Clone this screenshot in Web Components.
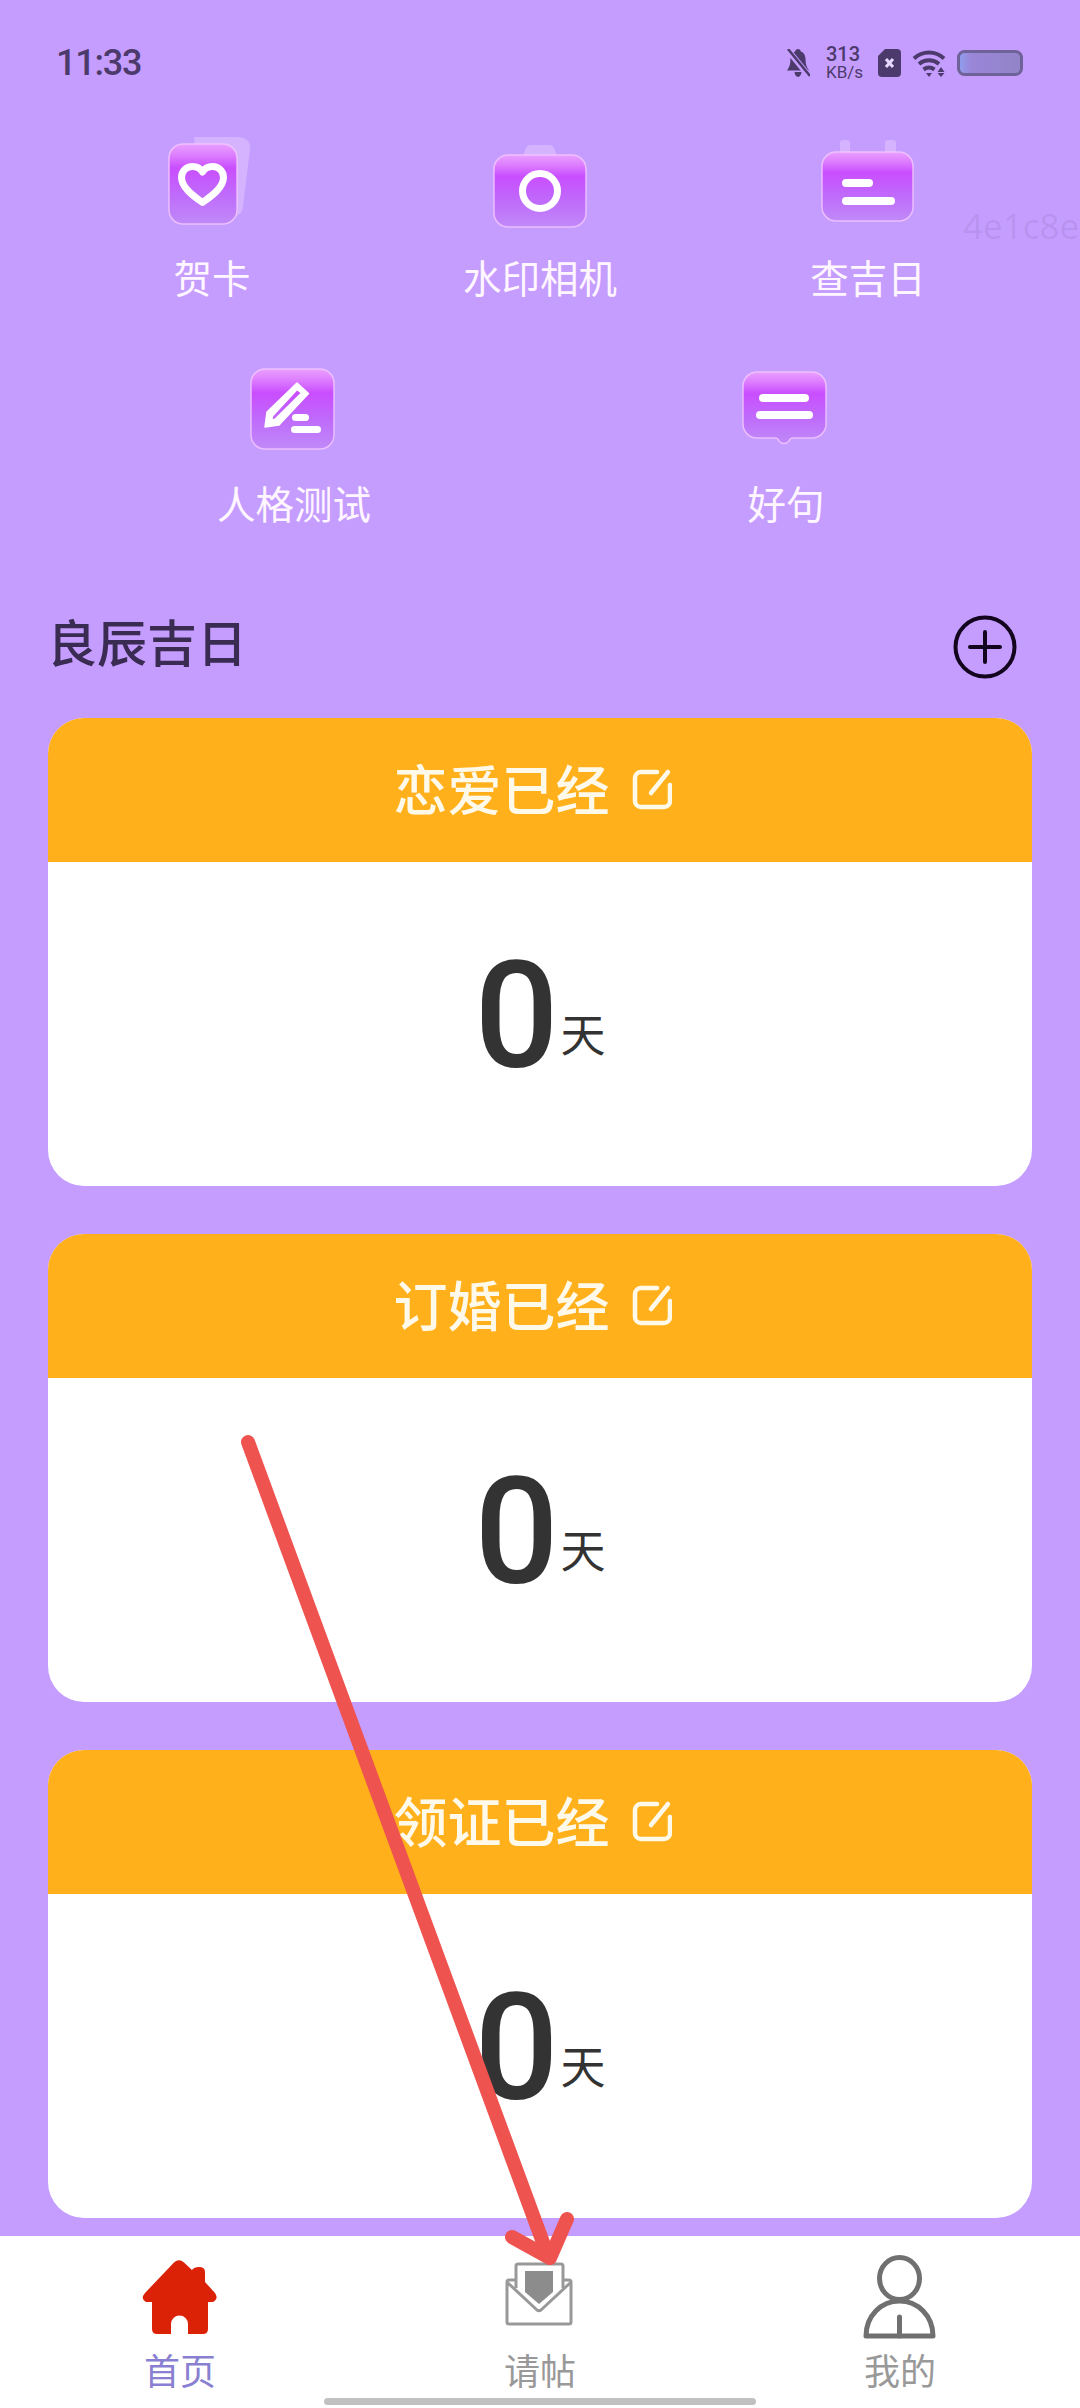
<!DOCTYPE html>
<html lang="zh">
<head>
<meta charset="utf-8">
<title>良辰吉日</title>
<style>
    html, body { margin: 0; padding: 0; background: #c59dff; }
    body { font-family: "Noto Sans CJK SC", "Noto Sans", sans-serif; }
</style>
</head>
<body>
<app-shell>
    <status-bar></status-bar>
    <tool-row columns="3">
        <tool-item icon="heart">贺卡</tool-item>
        <tool-item icon="camera">水印相机</tool-item>
        <tool-item icon="calendar">查吉日</tool-item>
    </tool-row>
    <tool-row columns="2" class="second">
        <tool-item icon="pencil">人格测试</tool-item>
        <tool-item icon="quote">好句</tool-item>
    </tool-row>
    <section-head>良辰吉日</section-head>
    <card-list>
        <day-card>恋爱已经</day-card>
        <day-card>订婚已经</day-card>
        <day-card>领证已经</day-card>
    </card-list>
    <tab-bar>
        <tab-item icon="home" active>首页</tab-item>
        <tab-item icon="mail">请帖</tab-item>
        <tab-item icon="user">我的</tab-item>
    </tab-bar>
    <water-mark>4e1c8e</water-mark>
    <drawn-arrow></drawn-arrow>
</app-shell>

<script>
class AppShell extends HTMLElement {
    constructor() {
        super()
        this.attachShadow({ mode: 'open' }).innerHTML = `<style>
            :host {
                display: flex;
                flex-direction: column;
                position: relative;
                width: 1080px;
                height: 2408px;
                overflow: hidden;
                background: #c59dff;
            }
        </style><slot></slot>`
    }
}

class StatusBar extends HTMLElement {
    constructor() {
        super()
        this.attachShadow({ mode: 'open' }).innerHTML = `<style>
            :host {
                display: flex;
                justify-content: space-between;
                box-sizing: border-box;
                height: 130px;
                padding: 38px 57px 0 56px;
                color: #4d3a6c;
                font-family: Roboto, sans-serif;
            }
            .time { font-size: 36px; font-weight: 500; line-height: 50px; letter-spacing: -1.2px; }
            .icons { display: flex; align-items: center; height: 50px; }
            .speed { margin: 0 14px 0 16px; width: 38px; font-size: 20px; line-height: 18px; font-weight: 500; }
            .speed small { display: block; font-size: 17px; font-weight: 400; white-space: nowrap; }
            svg { display: block; }
            .wifi { margin: 0 11px; }
        </style>
        <div class="time">11:33</div>
        <div class="icons">
            <svg width="24" height="28" viewBox="0 0 24 28" fill="#4d3a6c">
                <path d="M12 0c-1.600 0-2.600 1-2.800 2.400C5.600 3.600 4.400 7 4.400 11c0 4-.9 7.400-3.400 10.400h22c-2.500-3-3.400-6.400-3.400-10.400 0-4-1.200-7.400-4.800-8.600C14.600 1 13.600 0 12 0zM8.500 23c.3 2.800 1.700 5 3.500 5s3.200-2.200 3.500-5z"/>
                <path d="M1 0l22 27" stroke="#c59dff" stroke-width="6"/>
                <path d="M2 0l22 27" stroke="#4d3a6c" stroke-width="2.500"/>
            </svg>
            <div class="speed">313<small>KB/s</small></div>
            <svg width="23" height="28" viewBox="0 0 23 28">
                <path d="M7 0h12a4 4 0 0 1 4 4v20a4 4 0 0 1-4 4H4a4 4 0 0 1-4-4V7z" fill="#4d3a6c"/>
                <path d="M8 10l7 8M15 10l-7 8" stroke="#e6d8ff" stroke-width="3"/>
            </svg>
            <svg class="wifi" width="34" height="27" viewBox="0 0 34 27" fill="none" stroke="#4d3a6c" stroke-width="4">
                <path d="M2 8.500C10.500 .5 23.500 .5 32 8.500"/>
                <path d="M7 14c6-5 14-5 20 0"/>
                <path d="M11.500 19.500c3.500-2.500 7.500-2.500 11 0"/>
                <path d="M14 23h6l-3 4z" fill="#4d3a6c" stroke="none"/>
                <path d="M29 17l3.500 5h-7zM29 27l3.500-4h-7z" fill="#4d3a6c" stroke="none"/>
            </svg>
            <svg width="66" height="26" viewBox="0 0 66 26">
                <defs><linearGradient id="charge" x1="0" x2="1" y1="0" y2="0">
                    <stop offset="0" stop-color="#8f9ff0"/><stop offset=".2" stop-color="#9a86d8"/><stop offset="1" stop-color="#9284c8"/>
                </linearGradient></defs>
                <rect x="1.500" y="1.500" width="63" height="23" rx="6" fill="url(#charge)" stroke="#6f6298" stroke-width="3"/>
            </svg>
        </div>`
    }
}

class ToolRow extends HTMLElement {
    constructor() {
        super()
        this.attachShadow({ mode: 'open' }).innerHTML = `<style>
            :host {
                display: grid;
                grid-template-columns: repeat(${this.getAttribute("columns")}, 1fr);
                padding: 0 48px;
            }
            :host(.second) { margin-top: 55px; }
        </style><slot></slot>`
    }
}

const toolTile = (shape) => `<path d="${shape}" fill="url(#tile)" stroke="#f2c6ff" stroke-opacity=".85" stroke-width="1.500"/>`
const toolBack = "#dcbcff"

const toolIcons = {
    heart: `<path d="M32 7h46q11 2 10 12l-7 58q-1 10-12 9L40 84z" fill="${toolBack}" opacity=".7"/>
        ${toolTile("M21 14h40a14 14 0 0 1 14 14v52a14 14 0 0 1-14 14H21a14 14 0 0 1-14-14V28a14 14 0 0 1 14-14z")}
        <path d="M40.500 72.500C33 67 19.500 58 19.500 47.500c0-6.500 5-11 11-11 4.500 0 8 2 10 5.500 2-3.500 5.500-5.500 10-5.500 6 0 11 4.500 11 11 0 10.500-13.500 19.500-21 25z" fill="none" stroke="#fff" stroke-width="7" stroke-linejoin="round"/>`,
    camera: `<path d="M33 25l3-7q1-3 5-3h18q4 0 5 3l3 7z" fill="${toolBack}" opacity=".7"/>
        ${toolTile("M18 25h64a14 14 0 0 1 14 14v44a14 14 0 0 1-14 14H18a14 14 0 0 1-14-14V39a14 14 0 0 1 14-14z")}
        <circle cx="50" cy="61" r="17.500" fill="none" stroke="#fff" stroke-width="7"/>`,
    calendar: `<rect x="22" y="10" width="10" height="14" rx="3" fill="${toolBack}" opacity=".7"/>
        <rect x="67" y="10" width="11" height="14" rx="3" fill="${toolBack}" opacity=".7"/>
        ${toolTile("M18 22h63a14 14 0 0 1 14 14v41a14 14 0 0 1-14 14H18a14 14 0 0 1-14-14V36a14 14 0 0 1 14-14z")}
        <rect x="24" y="49" width="31" height="8" rx="4" fill="#fff"/>
        <rect x="24" y="67" width="53" height="8" rx="4" fill="#fff"/>`,
    pencil: `${toolTile("M21 13h55a14 14 0 0 1 14 14v52a14 14 0 0 1-14 14H21a14 14 0 0 1-14-14V27a14 14 0 0 1 14-14z")}
        <path d="M53 27l11.500 10.500L35 69l-14 2 2-15zM53 33.500L28.500 60l-1 4 3.500-.8L57.500 37z" fill="#fff" fill-rule="evenodd" stroke="#fff" stroke-width="1.500" stroke-linejoin="round"/>
        <rect x="48" y="58" width="17" height="7" rx="3.500" fill="#fff"/>
        <rect x="47" y="70" width="30" height="7" rx="3.500" fill="#fff"/>`,
    quote: `${toolTile("M21 16h55a14 14 0 0 1 14 14v38a14 14 0 0 1-14 14H57q-3 0-4 3-5 5-10 0-1-3-4-3H21a14 14 0 0 1-14-14V30a14 14 0 0 1 14-14z")}
        <rect x="23" y="38" width="50" height="8" rx="4" fill="#fff"/>
        <rect x="20" y="55" width="57" height="8" rx="4" fill="#fff"/>`,
}

class ToolItem extends HTMLElement {
    constructor() {
        super()
        this.attachShadow({ mode: 'open' }).innerHTML = `<style>
            :host {
                display: flex;
                flex-direction: column;
                align-items: center;
                color: #fff6ff;
                font-size: 38.500px;
                line-height: 50px;
            }
            svg { display: block; margin-bottom: 21px; }
        </style>
        <svg width="100" height="100" viewBox="0 0 100 100">
            <defs><linearGradient id="tile" x1="0" x2="0" y1="0" y2="1">
                <stop offset="0" stop-color="#e9a0ff"/>
                <stop offset=".14" stop-color="#dd7dff"/>
                <stop offset=".3" stop-color="#c94eff"/>
                <stop offset=".65" stop-color="#bf6cfb"/>
                <stop offset="1" stop-color="#c08af8"/>
            </linearGradient></defs>
            ${toolIcons[this.getAttribute("icon")]}
        </svg>
        <slot></slot>`
    }
}

class SectionHead extends HTMLElement {
    constructor() {
        super()
        this.attachShadow({ mode: 'open' }).innerHTML = `<style>
            :host {
                display: flex;
                justify-content: space-between;
                align-items: center;
                height: 60px;
                margin-top: 83px;
                padding: 0 63px 0 47px;
                color: #3a2b52;
                font-size: 50px;
                font-weight: 500;
            }
            svg { display: block; margin-top: 14px; }
        </style>
        <slot></slot>
        <svg width="64" height="64" viewBox="0 0 64 64" fill="none" stroke="#14051f" stroke-width="4">
            <circle cx="32" cy="32" r="29.500"/>
            <path d="M17 32h30M32 17v30" stroke-linecap="round"/>
        </svg>`
    }
}

class CardList extends HTMLElement {
    constructor() {
        super()
        this.attachShadow({ mode: 'open' }).innerHTML = `<style>
            :host {
                display: flex;
                flex-direction: column;
                gap: 48px;
                margin-top: 48px;
                padding: 0 48px;
            }
        </style><slot></slot>`
    }
}

class DayCard extends HTMLElement {
    constructor() {
        super()
        this.attachShadow({ mode: 'open' }).innerHTML = `<style>
            :host {
                display: block;
                height: 468px;
                border-radius: 36px;
                overflow: hidden;
                background: #fff;
            }
            header {
                display: flex;
                justify-content: center;
                align-items: center;
                gap: 22px;
                height: 144px;
                padding: 0 15px 6px 0;
                box-sizing: border-box;
                background: #ffb01b;
                color: #fff9ea;
                font-size: 54px;
                font-weight: 500;
            }
            svg { display: block; margin-top: 4px; }
            .count {
                display: flex;
                justify-content: center;
                align-items: baseline;
                height: 324px;
                color: #333;
                line-height: 310px;
            }
            .num { font-family: Roboto, sans-serif; font-size: 148px; font-weight: 500; }
            .unit { margin-left: 2px; font-size: 45px; position: relative; top: -15px; }
        </style>
        <header>
            <span><slot></slot></span>
            <svg width="40" height="42" viewBox="0 0 40 42" fill="none" stroke="#fff9ea" stroke-width="4.500" stroke-linecap="round">
                <path d="M25 4H9a6 6 0 0 0-6 6v23a6 6 0 0 0 6 6h23a6 6 0 0 0 6-6V17"/>
                <path d="M36 4L19 25"/>
            </svg>
        </header>
        <div class="count"><span class="num">0</span><span class="unit">天</span></div>`
    }
}

class TabBar extends HTMLElement {
    constructor() {
        super()
        this.attachShadow({ mode: 'open' }).innerHTML = `<style>
            :host {
                display: grid;
                grid-template-columns: repeat(3, 1fr);
                position: relative;
                box-sizing: border-box;
                height: 172px;
                margin-top: auto;
                padding-top: 16px;
                background: #fff;
            }
            .home-line {
                position: absolute;
                left: 324px;
                bottom: 3px;
                width: 432px;
                height: 7px;
                border-radius: 4px;
                background: #c1c1c1;
            }
        </style><slot></slot><div class="home-line"></div>`
    }
}

const tabIcons = {
    home: `<path d="M38 10.500L9 41q-5 6 1 9h6v27q0 5 5 5h14V72a8.500 8.500 0 0 1 17 0v10h15q5 0 5-5V50h5q6-3 2-9L69 30V20q0-5-6-5-5 0-7 3l-8-7.500q-5-4.500-10 0z" fill="#db2106"/>`,
    mail: `<path d="M20 36V14q0-2 2-2h43q2 0 2 2v22" fill="#fff" stroke="#999" stroke-width="3"/>
        <path d="M29 19h28v21L43 52 29 40z" fill="#8c8c8c"/>
        <path d="M20 28h-7q-2 0-2 2v40q0 2 2 2h60q2 0 2-2V30q0-2-2-2h-7M12 31l29 27q2 1.500 4 0l29-27" fill="none" stroke="#999" stroke-width="3" stroke-linejoin="round"/>`,
    user: `<g fill="none" stroke="#707070" stroke-width="5" stroke-linecap="round" stroke-linejoin="round">
        <ellipse cx="43.500" cy="26.500" rx="20" ry="21"/>
        <path d="M10 84C10 64 25 49 43.500 49S77 64 77 84z"/>
        <path d="M43.500 65v19"/></g>`,
}

class TabItem extends HTMLElement {
    constructor() {
        super()
        this.attachShadow({ mode: 'open' }).innerHTML = `<style>
            :host {
                display: flex;
                flex-direction: column;
                align-items: center;
                color: #999;
                font-size: 36px;
                line-height: 42px;
            }
            :host([active]) { color: #8a80d2; }
            svg { display: block; margin-bottom: 8px; }
        </style>
        <svg width="88" height="88" viewBox="0 0 88 88">${tabIcons[this.getAttribute("icon")]}</svg>
        <slot></slot>`
    }
}

class WaterMark extends HTMLElement {
    constructor() {
        super()
        this.attachShadow({ mode: 'open' }).innerHTML = `<style>
            :host {
                position: absolute;
                left: 963px;
                top: 200px;
                color: rgba(70, 50, 90, .1);
                font-family: "Open Sans", sans-serif;
                font-size: 35px;
                line-height: 52px;
                white-space: nowrap;
            }
        </style><slot></slot>`
    }
}

class DrawnArrow extends HTMLElement {
    constructor() {
        super()
        this.attachShadow({ mode: 'open' }).innerHTML = `<style>
            :host { position: absolute; inset: 0; pointer-events: none; }
            svg { display: block; }
        </style>
        <svg width="1080" height="2408" viewBox="0 0 1080 2408" fill="none" stroke="#ef5350" stroke-linecap="round" stroke-linejoin="round">
            <path d="M248 1442L548 2256" stroke-width="14"/>
            <path d="M512 2237L550 2258L567 2219" stroke-width="14"/>
        </svg>`
    }
}

customElements.define("app-shell", AppShell)
customElements.define("status-bar", StatusBar)
customElements.define("tool-row", ToolRow)
customElements.define("tool-item", ToolItem)
customElements.define("section-head", SectionHead)
customElements.define("card-list", CardList)
customElements.define("day-card", DayCard)
customElements.define("tab-bar", TabBar)
customElements.define("tab-item", TabItem)
customElements.define("water-mark", WaterMark)
customElements.define("drawn-arrow", DrawnArrow)
</script>
</body>
</html>
